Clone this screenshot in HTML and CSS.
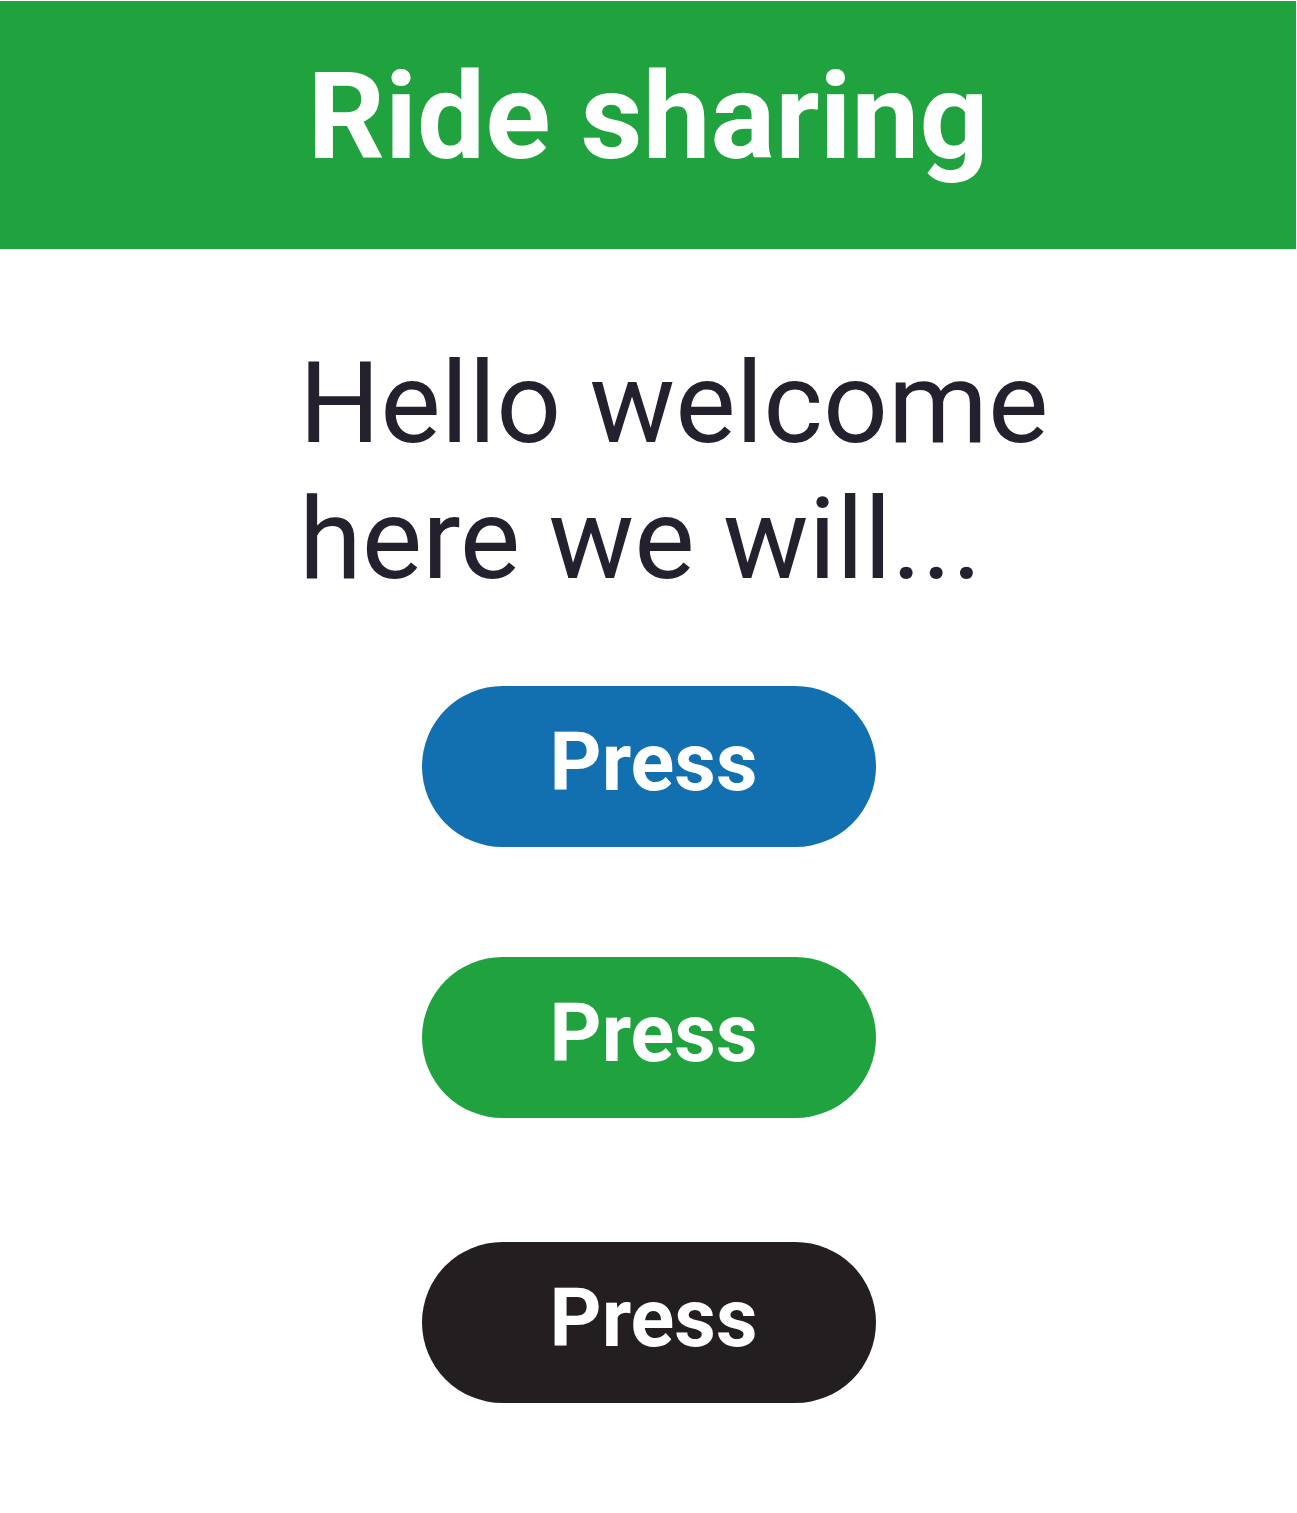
FILE: index.html
```html
<!DOCTYPE html>
<html lang="en">
<head>
<meta charset="utf-8">
<title>Ride sharing</title>
<link rel="stylesheet" href="styles.css">
</head>
<body>
<header class="topbar">
  <h1 class="topbar-title">Ride sharing</h1>
</header>
<main class="content">
  <p class="welcome">Hello welcome<br>here we will...</p>
  <div class="actions">
    <button class="pill pill-blue">Press</button>
    <button class="pill pill-green pill-second">Press</button>
    <button class="pill pill-black pill-third">Press</button>
  </div>
</main>
</body>
</html>
```

FILE: styles.css
```css
html, body {
  margin: 0;
  padding: 0;
  background: #ffffff;
}

body {
  font-family: Roboto, "Liberation Sans", sans-serif;
}

.topbar {
  margin: 1px 1px 0 0;
  height: 248px;
  background: #20a33f;
  box-sizing: border-box;
  padding-top: 45px;
}

.topbar-title {
  margin: 0;
  text-align: center;
  color: #ffffff;
  font-size: 121px;
  font-weight: 700;
  line-height: 143px;
}

.content {
  display: flex;
  flex-direction: column;
}

.welcome {
  margin: 86px 0 0 0;
  padding-left: 299px;
  font-size: 114px;
  line-height: 136px;
  font-weight: 400;
  color: #24202e;
}

.actions {
  display: flex;
  flex-direction: column;
  align-items: center;
  margin-top: 79px;
}

.pill {
  width: 454px;
  height: 161px;
  border: none;
  border-radius: 81px;
  padding: 0 0 7px 10px;
  box-sizing: border-box;
  font-family: Roboto, "Liberation Sans", sans-serif;
  font-size: 81px;
  font-weight: 700;
  line-height: 154px;
  color: #ffffff;
  text-align: center;
  cursor: pointer;
}

.pill-blue { background: #1270b0; }
.pill-green { background: #20a33f; }
.pill-black { background: #231f20; }

.pill-second { margin-top: 110px; }
.pill-third { margin-top: 124px; }
```
